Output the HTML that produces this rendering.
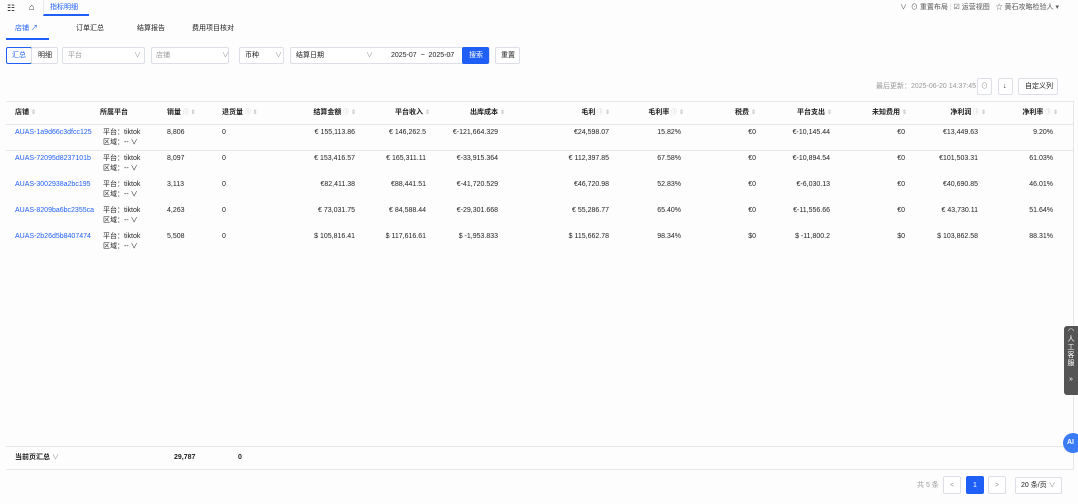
<!DOCTYPE html>
<html><head><meta charset="utf-8"><style>
*{margin:0;padding:0;box-sizing:border-box}
body{width:1078px;height:504px;background:#fdfdfd;font-family:"Liberation Sans","Noto Sans CJK SC",sans-serif;font-size:7px;color:#222;position:relative;overflow:hidden}
.a{position:absolute;white-space:nowrap;line-height:10px}
.b{position:absolute;border:1px solid #dcdfe6;border-radius:2px;background:#fff}
.blue{color:#1f5ff5}
.g{color:#999}
.r{text-align:right}
.hl{position:absolute;height:1px;background:#e6e8eb}
.hd{font-weight:bold}
.s{color:#c8c8c8;font-size:6px}
</style></head><body>
<!-- top bar -->
<div class="a" style="left:7px;top:3px;font-size:9px">☷</div>
<div class="a" style="left:29px;top:2px;font-size:9px">⌂</div>
<div class="a" style="left:43px;top:0;width:46px;height:16px;border-left:1px solid #e6e8eb;border-bottom:2px solid #1f5ff5"></div>
<div class="a blue" style="left:50px;top:3px">指标明细</div>
<div class="a" style="left:900px;top:3px;color:#555">∨ &nbsp;⊙ 重置布局 <span style="color:#ddd">|</span> ☑ 运营视图 &nbsp; ☆ 黄石攻略检验人 ▾</div>
<!-- second tabs -->
<div class="a blue" style="left:15px;top:24px">店铺 ↗</div>
<div class="hl" style="left:6px;top:38px;width:43px;height:2px;background:#1f5ff5"></div>
<div class="a" style="left:76px;top:24px">订单汇总</div>
<div class="a" style="left:137px;top:24px">结算报告</div>
<div class="a" style="left:192px;top:24px">费用项目核对</div>
<!-- filters -->
<div class="b" style="left:6px;top:47px;width:26px;height:17px;border-color:#1f5ff5"></div>
<div class="a blue" style="left:12px;top:51px">汇总</div>
<div class="b" style="left:31px;top:47px;width:27px;height:17px"></div>
<div class="a" style="left:38px;top:51px">明细</div>
<div class="b" style="left:62px;top:47px;width:83px;height:17px"></div>
<div class="a g" style="left:68px;top:51px">平台</div><div class="a g" style="left:134px;top:51px">∨</div>
<div class="b" style="left:151px;top:47px;width:78px;height:17px"></div>
<div class="a g" style="left:156px;top:51px">店铺</div><div class="a g" style="left:222px;top:51px">∨</div>
<div class="b" style="left:239px;top:47px;width:45px;height:17px"></div>
<div class="a" style="left:245px;top:51px">币种</div><div class="a g" style="left:275px;top:51px">∨</div>
<div class="b" style="left:290px;top:47px;width:200px;height:17px"></div>
<div class="a" style="left:296px;top:51px">结算日期</div><div class="a g" style="left:366px;top:51px">∨</div>
<div class="a" style="left:391px;top:51px">2025-07 &nbsp;~&nbsp; 2025-07</div>
<div class="a g" style="left:445px;top:51px">▭</div>
<div class="b" style="left:462px;top:47px;width:27px;height:17px;background:#1f5ff5;border-color:#1f5ff5"></div>
<div class="a" style="left:469px;top:51px;color:#fff">搜索</div>
<div class="b" style="left:495px;top:47px;width:25px;height:17px"></div>
<div class="a" style="left:501px;top:51px">重置</div>
<!-- right tools -->
<div class="a g" style="left:876px;top:82px">最后更新：2025-06-20 14:37:45</div>
<div class="b" style="left:977px;top:78px;width:15px;height:17px"></div><div class="a g" style="left:981px;top:82px">⊙</div>
<div class="b" style="left:998px;top:78px;width:15px;height:17px"></div><div class="a" style="left:1003px;top:82px">↓</div>
<div class="b" style="left:1018px;top:78px;width:40px;height:17px"></div><div class="a" style="left:1025px;top:82px">自定义列</div>
<!-- table -->
<div class="hl" style="left:6px;top:101px;width:1068px"></div>
<div class="a" style="left:1073px;top:101px;width:1px;height:369px;background:#e6e8eb"></div>
<div class="hl" style="left:6px;top:124px;width:1068px"></div>
<div class="a hd" style="left:15px;top:108px">店铺 <span class="s">⇕</span></div>
<div class="a hd" style="left:100px;top:108px">所属平台</div>
<div class="a hd" style="left:167px;top:108px">销量 <span class="s">ⓘ ⇕</span></div>
<div class="a hd" style="left:222px;top:108px">退货量 <span class="s">ⓘ ⇕</span></div>
<div class="a hd r" style="left:290px;top:108px;width:66px">结算金额 <span class="s">ⓘ ⇕</span></div>
<div class="a hd r" style="left:380px;top:108px;width:50px">平台收入 <span class="s">⇕</span></div>
<div class="a hd r" style="left:450px;top:108px;width:55px">出库成本 <span class="s">⇕</span></div>
<div class="a hd r" style="left:560px;top:108px;width:50px">毛利 <span class="s">ⓘ ⇕</span></div>
<div class="a hd r" style="left:630px;top:108px;width:54px">毛利率 <span class="s">ⓘ ⇕</span></div>
<div class="a hd r" style="left:720px;top:108px;width:36px">税费 <span class="s">⇕</span></div>
<div class="a hd r" style="left:780px;top:108px;width:52px">平台支出 <span class="s">⇕</span></div>
<div class="a hd r" style="left:855px;top:108px;width:52px">未知费用 <span class="s">⇕</span></div>
<div class="a hd r" style="left:920px;top:108px;width:66px">净利润 <span class="s">ⓘ ⇕</span></div>
<div class="a hd r" style="left:1000px;top:108px;width:58px">净利率 <span class="s">ⓘ ⇕</span></div>
<div class="hl" style="left:6px;top:150px;width:1068px"></div>

<div id="rows"></div>
<script>
var d=[["AUAS-1a9d66c3dfcc125","8,806","€ 155,113.86","€ 146,262.5","€-121,664.329","€24,598.07","15.82%","€0","€-10,145.44","€0","€13,449.63","9.20%"],
["AUAS-72095d8237101b","8,097","€ 153,416.57","€ 165,311.11","€-33,915.364","€ 112,397.85","67.58%","€0","€-10,894.54","€0","€101,503.31","61.03%"],
["AUAS-3002938a2bc195","3,113","€82,411.38","€88,441.51","€-41,720.529","€46,720.98","52.83%","€0","€-6,030.13","€0","€40,690.85","46.01%"],
["AUAS-8209ba6bc2355ca","4,263","€ 73,031.75","€ 84,588.44","€-29,301.668","€ 55,286.77","65.40%","€0","€-11,556.66","€0","€ 43,730.11","51.64%"],
["AUAS-2b26d5b8407474","5,508","$ 105,816.41","$ 117,616.61","$ -1,953.833","$ 115,662.78","98.34%","$0","$ -11,800.2","$0","$ 103,862.58","88.31%"]];
var R=[355,426,498,609,681,756,830,905,978,1053],h="";
d.forEach(function(r,i){var y=128+i*26;
h+='<div class="a blue" style="left:15px;top:'+y+'px">'+r[0]+'</div>';
h+='<div class="a" style="left:103px;top:'+y+'px">平台：tiktok</div>';
h+='<div class="a" style="left:103px;top:'+(y+10)+'px">区域：-- ∨</div>';
h+='<div class="a" style="left:167px;top:'+y+'px">'+r[1]+'</div>';
h+='<div class="a" style="left:222px;top:'+y+'px">0</div>';
for(var k=0;k<10;k++)h+='<div class="a r" style="left:'+(R[k]-100)+'px;width:100px;top:'+y+'px">'+r[k+2]+'</div>';});
document.getElementById('rows').innerHTML=h;
</script>
<!-- summary -->
<div class="hl" style="left:6px;top:446px;width:1068px"></div>
<div class="hl" style="left:6px;top:469px;width:1068px"></div>
<div class="a hd" style="left:15px;top:453px">当前页汇总 <span class="g" style="font-weight:normal">∨</span></div>
<div class="a hd" style="left:174px;top:453px">29,787</div>
<div class="a hd" style="left:238px;top:453px">0</div>
<!-- pagination -->
<div class="a g" style="left:917px;top:481px">共 5 条</div>
<div class="b" style="left:943px;top:476px;width:18px;height:18px"></div><div class="a g" style="left:950px;top:481px">&lt;</div>
<div class="b" style="left:966px;top:476px;width:18px;height:18px;background:#1f5ff5;border-color:#1f5ff5"></div><div class="a" style="left:973px;top:481px;color:#fff">1</div>
<div class="b" style="left:988px;top:476px;width:18px;height:18px"></div><div class="a g" style="left:995px;top:481px">&gt;</div>
<div class="b" style="left:1015px;top:477px;width:47px;height:17px"></div><div class="a" style="left:1021px;top:481px">20 条/页 <span class="g">∨</span></div>
<!-- float widgets -->
<div class="a" style="left:1064px;top:326px;width:14px;height:69px;background:#555;border-radius:3px 0 0 3px;color:#fff;font-size:7px;line-height:8px;text-align:center;white-space:normal;padding-top:2px">◠<br>人<br>工<br>客<br>服<br><br>»</div>
<div class="a" style="left:1063px;top:433px;width:20px;height:20px;border-radius:50%;background:#3b7bf6;color:#fff;font-weight:bold;line-height:20px;padding-left:4px">AI</div>
</body></html>
